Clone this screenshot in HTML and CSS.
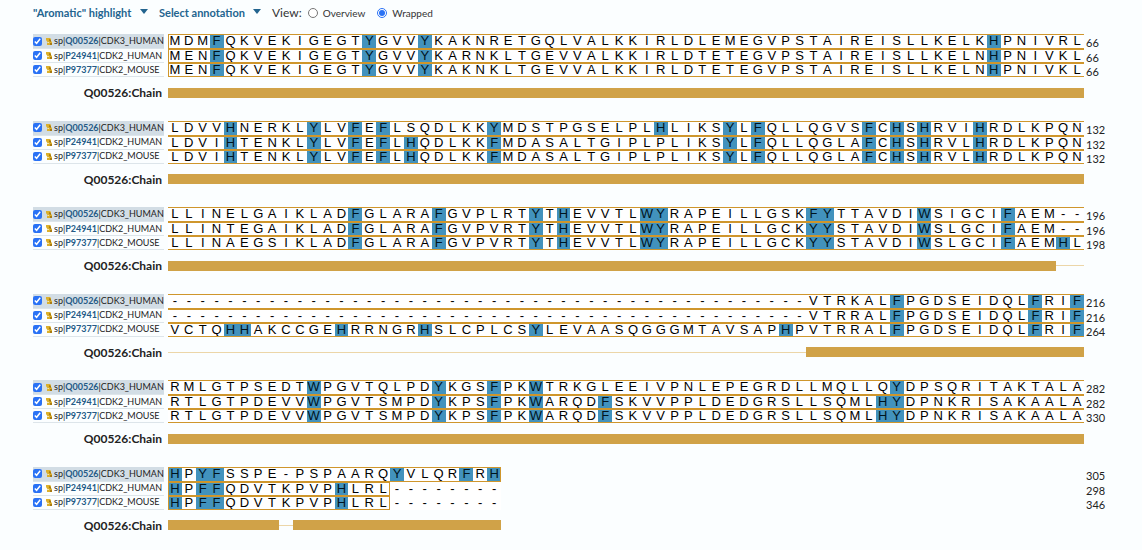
FILE: index.html
```html
<!DOCTYPE html>
<html lang="en">
<head>
<meta charset="utf-8">
<title>Alignment</title>
<link rel="stylesheet" href="styles.css">
</head>
<body>
<form class="toolbar">
  <label class="picker">
    <select class="picker-select" aria-label="Highlight"><option>"Aromatic" highlight</option></select>
    <svg class="caret" viewBox="0 0 8 5" aria-hidden="true"><path d="M0 0h8L4 5z"/></svg>
  </label>
  <label class="picker">
    <select class="picker-select" aria-label="Annotation"><option>Select annotation</option></select>
    <svg class="caret" viewBox="0 0 8 5" aria-hidden="true"><path d="M0 0h8L4 5z"/></svg>
  </label>
  <div class="view">
    <span class="view-title">View:</span>
    <label class="view-option"><input class="radio" type="radio" name="view">Overview</label>
    <label class="view-option"><input class="radio" type="radio" name="view" checked>Wrapped</label>
  </div>
</form>
<main class="alignment" id="alignment"></main>
<script src="alignment.js"></script>
</body>
</html>
```
FILE: styles.css
```css
* { box-sizing: border-box; }

body {
  margin: 0;
  min-height: 100vh;
  padding: 0 32px 19px 33px;
  display: flex;
  flex-direction: column;
  background: #fbfeff;
  color: #222;
  font-family: Lato, "Liberation Sans", sans-serif;
}

.toolbar {
  display: flex;
  align-items: center;
  gap: 11px;
  height: 25px;
  margin-bottom: 9px;
  font-size: 12px;
}

.picker {
  display: flex;
  align-items: center;
  gap: 8px;
}

.picker-select {
  appearance: none;
  border: 0;
  padding: 0;
  background: none;
  color: #23648f;
  font: bold 11px Lato, "Liberation Sans", sans-serif;
}

.caret {
  width: 8px;
  height: 5px;
  margin-bottom: 3px;
  fill: #23648f;
}

.view {
  display: flex;
  align-items: center;
  color: #333;
}

.view-title { margin-right: 6px; }

.view-option {
  display: flex;
  align-items: center;
  gap: 5px;
  margin-right: 12px;
  font-size: 10px;
}

.radio {
  width: 10px;
  height: 10px;
  margin: 0;
  accent-color: #2a72f5;
}

.alignment {
  flex: 1;
  display: flex;
  flex-direction: column;
  justify-content: space-between;
  gap: 12px;
}

.block {
  display: grid;
  grid-template-columns: 131px 1fr 22px;
  grid-template-rows: 43px 11px;
  column-gap: 4px;
  row-gap: 10px;
}

.labels, .rows, .ends {
  display: grid;
  grid-template-rows: 15px 14px 14px;
}

.label {
  display: flex;
  align-items: center;
  border-bottom: 1px solid #dde5ea;
  font-size: 9px;
  line-height: 12px;
  white-space: nowrap;
}

.label-reference { background: #d2dde5; }

.tick {
  width: 9px;
  height: 9px;
  margin: 0 4px 0 0;
  accent-color: #2a72f5;
}

.reviewed {
  flex: none;
  width: 6px;
  height: 7px;
  margin-right: 2px;
}

.accession {
  color: #245a86;
  font-weight: bold;
  text-decoration: none;
}

.row, .chain {
  display: grid;
  grid-template-columns: repeat(66, 1fr);
}

.frame {
  grid-row: 1;
  z-index: 1;
  border: solid #cf962c;
  border-width: 1px 0;
}

.frame-first { border-left-width: 1px; }
.frame-last { border-right-width: 1px; }

.residue {
  grid-row: 1;
  background: #fff;
  color: #000;
  font: 13px/14px "Liberation Sans", Arial, sans-serif;
  text-align: center;
  min-width: 0;
}

.aromatic { background: #4292bd; color: #00141f; }

.ends {
  margin-left: -2px;
  padding-top: 1px;
  margin-bottom: -1px;
  font-size: 11px;
  line-height: 15px;
}

.chain-label {
  padding-right: 2px;
  font-size: 12px;
  font-weight: bold;
  line-height: 11px;
  text-align: right;
}

.chain { align-items: center; }

.chain-part {
  height: 10px;
  background: #d0a248;
}

.chain-gap {
  height: 1px;
  background: #ecd6a8;
}
```
FILE: alignment.js
```js
const COLUMNS = 66;
const gap = "-".repeat(46);

const sequences = [
  {
    accession: "Q00526", name: "CDK3_HUMAN",
    lines: [
      "MDMFQKVEKIGEGTYGVVYKAKNRETGQLVALKKIRLDLEMEGVPSTAIREISLLKELKHPNIVRL",
      "LDVVHNERKLYLVFEFLSQDLKKYMDSTPGSELPLHLIKSYLFQLLQGVSFCHSHRVIHRDLKPQN",
      "LLINELGAIKLADFGLARAFGVPLRTYTHEVVTLWYRAPEILLGSKFYTTAVDIWSIGCIFAEM--",
      gap + "VTRKALFPGDSEIDQLFRIF",
      "RMLGTPSEDTWPGVTQLPDYKGSFPKWTRKGLEEIVPNLEPEGRDLLMQLLQYDPSQRITAKTALA",
      "HPYFSSPE-PSPAARQYVLQRFRH"
    ]
  },
  {
    accession: "P24941", name: "CDK2_HUMAN",
    lines: [
      "MENFQKVEKIGEGTYGVVYKARNKLTGEVVALKKIRLDTETEGVPSTAIREISLLKELNHPNIVKL",
      "LDVIHTENKLYLVFEFLHQDLKKFMDASALTGIPLPLIKSYLFQLLQGLAFCHSHRVLHRDLKPQN",
      "LLINTEGAIKLADFGLARAFGVPVRTYTHEVVTLWYRAPEILLGCKYYSTAVDIWSLGCIFAEM--",
      gap + "VTRRALFPGDSEIDQLFRIF",
      "RTLGTPDEVVWPGVTSMPDYKPSFPKWARQDFSKVVPPLDEDGRSLLSQMLHYDPNKRISAKAALA",
      "HPFFQDVTKPVPHLRL--------"
    ]
  },
  {
    accession: "P97377", name: "CDK2_MOUSE",
    lines: [
      "MENFQKVEKIGEGTYGVVYKAKNKLTGEVVALKKIRLDTETEGVPSTAIREISLLKELNHPNIVKL",
      "LDVIHTENKLYLVFEFLHQDLKKFMDASALTGIPLPLIKSYLFQLLQGLAFCHSHRVLHRDLKPQN",
      "LLINAEGSIKLADFGLARAFGVPVRTYTHEVVTLWYRAPEILLGCKYYSTAVDIWSLGCIFAEMHL",
      "VCTQHHAKCCGEHRRNGRHSLCPLCSYLEVAASQGGGMTAVSAPHPVTRRALFPGDSEIDQLFRIF",
      "RTLGTPDEVVWPGVTSMPDYKPSFPKWARQDFSKVVPPLDEDGRSLLSQMLHYDPNKRISAKAALA",
      "HPFFQDVTKPVPHLRL--------"
    ]
  }
];

const reviewedIcon = `<svg class="reviewed" viewBox="0 0 6 7" aria-hidden="true">
  <path fill="#dcb02c" d="M0 0h4l1 1v2l1 1v3H1V5h1L0 2z"/>
  <path fill="#a97b12" d="M3 1l2 1v2L3 3zM4 5h2v2H4z"/>
  <path fill="#f7e6a6" d="M2 4h1v1H2z"/></svg>`;

function labelHtml(seq, index, block) {
  const id = `seq-${block}-${index}`;
  return `<div class="label${index === 0 ? " label-reference" : ""}">
    <input class="tick" type="checkbox" id="${id}" checked>${reviewedIcon}
    <label for="${id}">sp|<a class="accession" href="#${seq.accession}">${seq.accession}</a>|${seq.name}</label>
  </div>`;
}

function rowHtml(line, block) {
  const last = block === 5;
  const cells = [...line].map((c, i) =>
    `<span class="residue${"FYWH".includes(c) ? " aromatic" : ""}" style="grid-column:${i + 1}">${c}</span>`).join("");
  const end = last ? line.replace(/-+$/, "").length : COLUMNS;
  const edges = (block === 0 || last ? " frame-first" : "") + (last ? " frame-last" : "");
  return `<div class="row">${cells}<span class="frame${edges}" style="grid-column:1/${end + 1}"></span></div>`;
}

function chainHtml(line) {
  return line.match(/-+|[^-]+/g).map(run =>
    `<span class="${run[0] === "-" ? "chain-gap" : "chain-part"}" style="grid-column:span ${run.length}"></span>`).join("");
}

const totals = sequences.map(() => 0);
document.getElementById("alignment").innerHTML = sequences[0].lines.map((reference, block) => {
  sequences.forEach((seq, i) => { totals[i] += seq.lines[block].replace(/-/g, "").length; });
  return `<section class="block">
    <div class="labels">${sequences.map((seq, i) => labelHtml(seq, i, block)).join("")}</div>
    <div class="rows">${sequences.map(seq => rowHtml(seq.lines[block], block)).join("")}</div>
    <div class="ends">${totals.map(n => `<span>${n}</span>`).join("")}</div>
    <div class="chain-label">Q00526:Chain</div>
    <div class="chain">${chainHtml(reference)}</div>
  </section>`;
}).join("");
```
